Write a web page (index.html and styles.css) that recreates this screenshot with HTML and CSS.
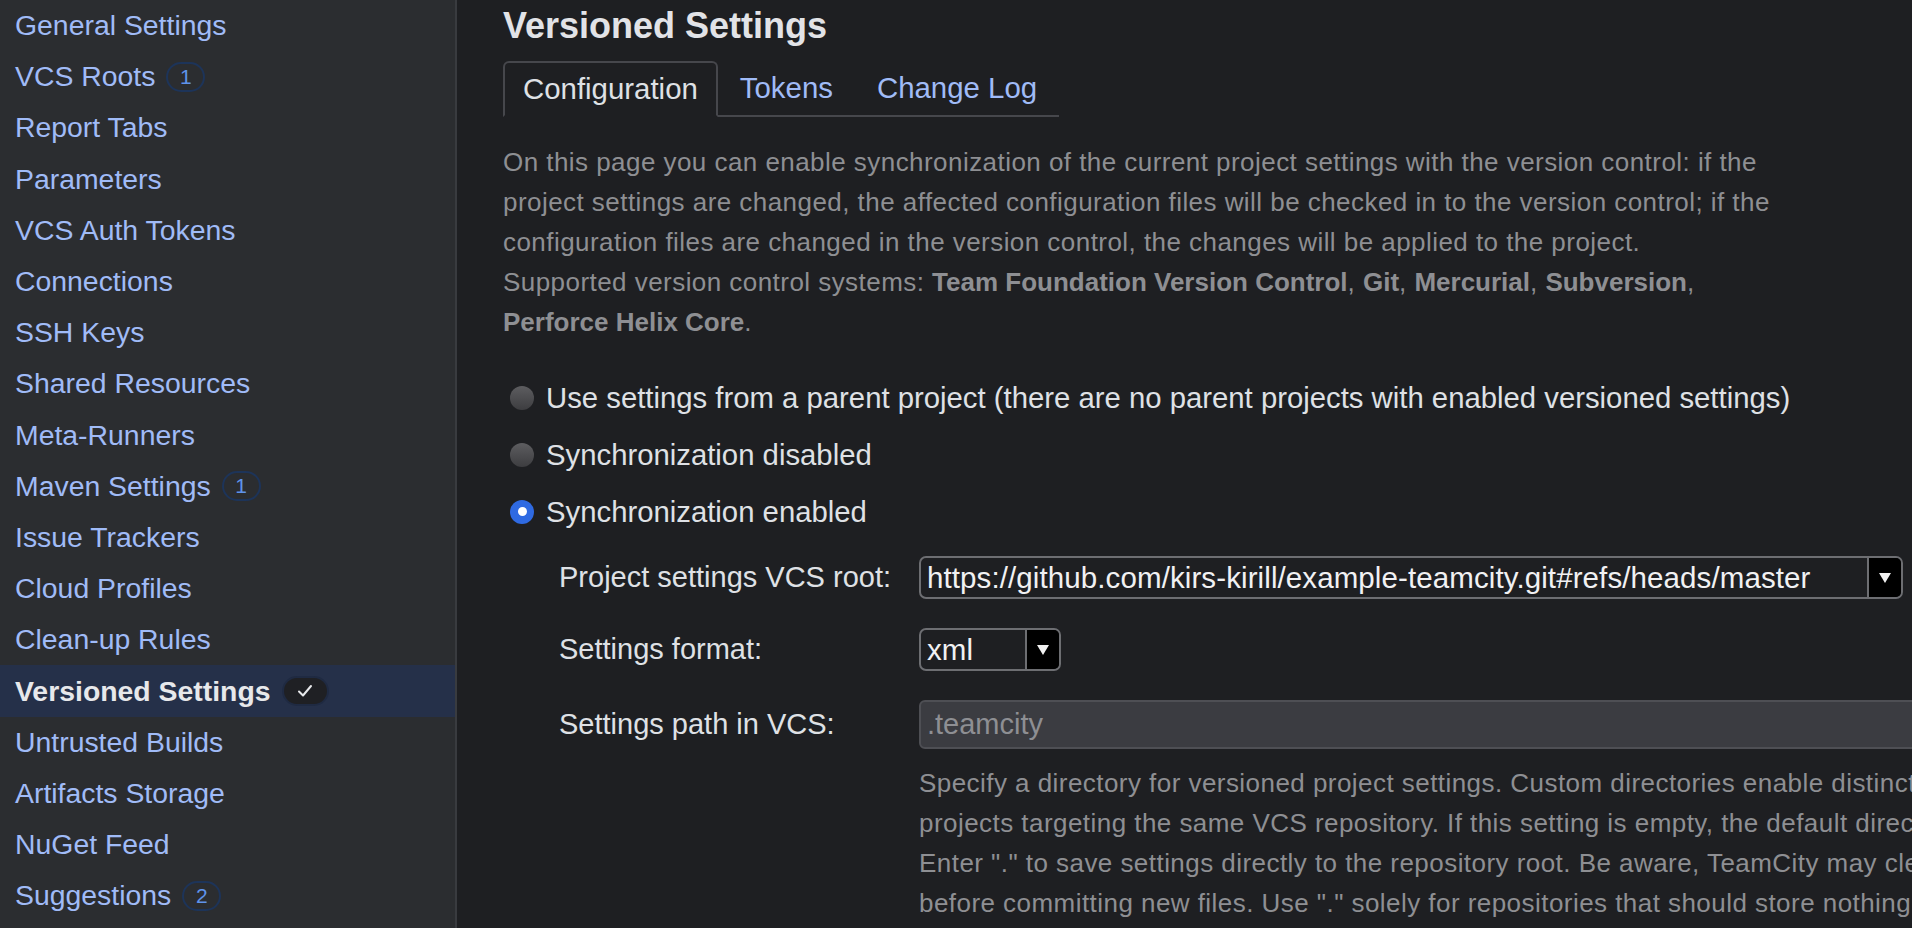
FILE: index.html
```html
<!DOCTYPE html>
<html lang="en">
<head>
<meta charset="utf-8">
<title>Versioned Settings</title>
<link rel="stylesheet" href="styles.css">
</head>
<body>
<aside class="sidebar">
  <ul class="nav">
    <li class="nav-item">General Settings</li>
    <li class="nav-item">VCS Roots <span class="badge">1</span></li>
    <li class="nav-item">Report Tabs</li>
    <li class="nav-item">Parameters</li>
    <li class="nav-item">VCS Auth Tokens</li>
    <li class="nav-item">Connections</li>
    <li class="nav-item">SSH Keys</li>
    <li class="nav-item">Shared Resources</li>
    <li class="nav-item">Meta-Runners</li>
    <li class="nav-item">Maven Settings <span class="badge">1</span></li>
    <li class="nav-item">Issue Trackers</li>
    <li class="nav-item">Cloud Profiles</li>
    <li class="nav-item">Clean-up Rules</li>
    <li class="nav-item active">Versioned Settings <span class="badge badge-check"><svg width="16" height="14" viewBox="0 0 16 14"><path d="M2 7.5 L6 11.5 L14 2" fill="none" stroke="#e8e9ec" stroke-width="2" stroke-linecap="round" stroke-linejoin="round"/></svg></span></li>
    <li class="nav-item">Untrusted Builds</li>
    <li class="nav-item">Artifacts Storage</li>
    <li class="nav-item">NuGet Feed</li>
    <li class="nav-item">Suggestions <span class="badge">2</span></li>
  </ul>
</aside>
<main class="main">
  <h1 class="title">Versioned Settings</h1>
  <ul class="tabs">
    <li class="tab active">Configuration</li>
    <li class="tab">Tokens</li>
    <li class="tab">Change Log</li>
  </ul>
  <p class="desc">On this page you can enable synchronization of the current project settings with the version control: if the project settings are changed, the affected configuration files will be checked in to the version control; if the configuration files are changed in the version control, the changes will be applied to the project.<br>Supported version control systems: <b>Team Foundation Version Control</b>, <b>Git</b>, <b>Mercurial</b>, <b>Subversion</b>, <b>Perforce Helix Core</b>.</p>

  <div class="radios">
    <div class="radio-row"><span class="radio"></span>Use settings from a parent project (there are no parent projects with enabled versioned settings)</div>
    <div class="radio-row"><span class="radio"></span>Synchronization disabled</div>
    <div class="radio-row"><span class="radio checked"></span>Synchronization enabled</div>
  </div>

  <div class="form">
    <div class="label">Project settings VCS root:</div>
    <div class="select select-wide">
      <span class="select-value">https://github.com/kirs-kirill/example-teamcity.git#refs/heads/master</span>
      <span class="select-btn"><svg width="14" height="12" viewBox="0 0 14 12"><path d="M1 1 H13 L7 11 Z" fill="#f2f2f2"/></svg></span>
    </div>

    <div class="label">Settings format:</div>
    <div class="select select-small">
      <span class="select-value">xml</span>
      <span class="select-btn"><svg width="14" height="12" viewBox="0 0 14 12"><path d="M1 1 H13 L7 11 Z" fill="#f2f2f2"/></svg></span>
    </div>

    <div class="label label-tall">Settings path in VCS:</div>
    <div class="field">
      <div class="input">.teamcity</div>
      <p class="help">Specify a directory for versioned project settings. Custom directories enable distinct settings for multiple<br>projects targeting the same VCS repository. If this setting is empty, the default directory (.teamcity) is used.<br>Enter "." to save settings directly to the repository root. Be aware, TeamCity may clear the target directory<br>before committing new files. Use "." solely for repositories that should store nothing but TeamCity settings.</p>
    </div>
  </div>
</main>
</body>
</html>
```
FILE: styles.css
```css
* { box-sizing: border-box; }
html, body { margin: 0; padding: 0; }
body {
  width: 1912px;
  height: 928px;
  overflow: hidden;
  display: flex;
  background: #1e1f22;
  font-family: "Liberation Sans", Arial, sans-serif;
  color: #dfe1e5;
}

/* Sidebar */
.sidebar {
  width: 457px;
  flex: none;
  background: #2b2d30;
  border-right: 2px solid #393b3f;
}
.nav { list-style: none; margin: 0; padding: 0; }
.nav-item {
  height: 51.2px;
  display: flex;
  align-items: center;
  gap: 11px;
  padding-left: 15px;
  font-size: 28.4px;
  color: #a0bbf7;
  white-space: nowrap;
}
.nav-item.active {
  background: #253049;
  color: #e7e8eb;
  font-weight: bold;
}
.badge {
  display: inline-flex;
  align-items: center;
  justify-content: center;
  min-width: 39px;
  height: 30px;
  border: 2px solid #1d3459;
  border-radius: 15px;
  font-size: 21px;
  font-weight: normal;
  color: #5f93ea;
}
.badge-check {
  width: 47px;
  background: #1f2024;
  border-color: #1f2a42;
}

/* Main */
.main {
  flex: 1;
  min-width: 0;
  overflow: hidden;
  padding-left: 46px;
}
.title {
  margin: 0;
  font-size: 36px;
  line-height: 52px;
  font-weight: bold;
  color: #e2e3e7;
}
.tabs {
  display: inline-flex;
  list-style: none;
  margin: 9px 0 0;
  padding: 0;
  border-bottom: 2px solid #46474c;
}
.tab {
  height: 54px;
  display: flex;
  align-items: center;
  padding: 0 22px;
  font-size: 29.4px;
  color: #a0bbf7;
}
.tab.active {
  height: 56px;
  margin-bottom: -2px;
  padding: 0 18px;
  border: 2px solid #46474c;
  border-bottom-color: #1e1f22;
  border-radius: 6px 6px 0 0;
  color: #dfe1e5;
}
.desc {
  margin: 25px 0 0;
  max-width: 1285px;
  font-size: 26px;
  letter-spacing: 0.45px;
  line-height: 40px;
  color: #8e8f93;
}
.desc b { font-weight: bold; letter-spacing: 0; }

.radios { margin-top: 27px; padding-left: 7px; }
.radio-row {
  height: 57px;
  display: flex;
  align-items: center;
  gap: 12px;
  font-size: 29.3px;
  color: #dfe1e5;
  white-space: nowrap;
}
.radio {
  width: 24px;
  height: 24px;
  flex: none;
  border-radius: 50%;
  background: linear-gradient(#5d5d60, #3d3d40);
}
.radio.checked {
  display: flex;
  align-items: center;
  justify-content: center;
  background: #2f6ae2;
}
.radio.checked::after {
  content: "";
  width: 9px;
  height: 9px;
  border-radius: 50%;
  background: #fff;
}

.form {
  display: grid;
  grid-template-columns: 360px auto;
  justify-content: start;
  row-gap: 29px;
  margin-top: 16px;
  padding-left: 56px;
  align-items: start;
}
.label {
  font-size: 29px;
  line-height: 43px;
  color: #dfe1e5;
  white-space: nowrap;
}
.label-tall { line-height: 49px; }

.select {
  display: flex;
  height: 43px;
  border: 2px solid #6d6e72;
  border-radius: 7px;
  overflow: hidden;
  background: #1e1f22;
}
.select-wide { width: 984px; }
.select-small { width: 142px; }
.select-value {
  flex: 1;
  padding-left: 6px;
  font-size: 29.5px;
  letter-spacing: 0.1px;
  line-height: 39px;
  color: #f1f1f3;
  white-space: nowrap;
  overflow: hidden;
}
.select-btn {
  width: 34px;
  flex: none;
  display: flex;
  align-items: center;
  justify-content: center;
  background: #000;
  border-left: 2px solid #6d6e72;
}

.field { width: 1100px; }
.input {
  height: 49px;
  padding-left: 6px;
  border: 2px solid #4e4f54;
  border-radius: 6px;
  background: #3b3c41;
  font-size: 29px;
  line-height: 45px;
  color: #8e8f93;
}
.help {
  margin: 14px 0 0;
  font-size: 26px;
  letter-spacing: 0.45px;
  line-height: 40px;
  color: #8e8f93;
  white-space: nowrap;
}
```
